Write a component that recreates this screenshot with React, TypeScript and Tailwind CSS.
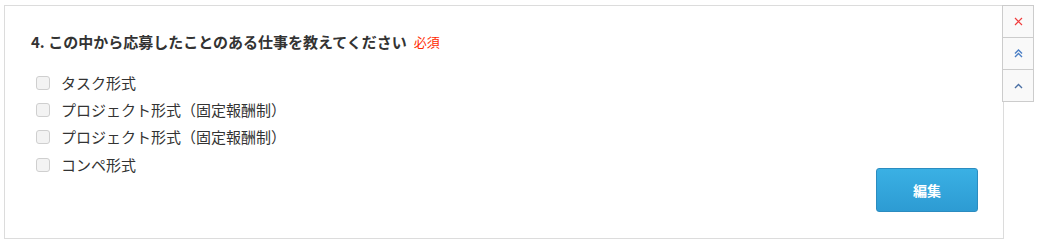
import React from 'react';

const options = [
  'タスク形式',
  'プロジェクト形式（固定報酬制）',
  'プロジェクト形式（固定報酬制）',
  'コンペ形式',
];

const App = () => {
  return (
    <div className="pl-[4px] pt-[5px] font-['Noto_Sans_CJK_JP','Noto_Sans',sans-serif] text-[#333]">
      <div className="relative flex h-[234px] w-[1000px] flex-col border border-[#dcdcdc] bg-white pb-[26px] pl-[26px] pr-[25px] pt-[26px]">
        {/* Question */}
        <div className="flex items-center leading-[20px]">
          <h2 className="text-[15px] font-bold text-[#333]">4. この中から応募したことのある仕事を教えてください</h2>
          <span className="ml-[7px] text-[13px] text-[#ff2a00]">必須</span>
        </div>

        <div className="mt-[17px] flex flex-1 justify-between">
          <ul className="self-start">
            {options.map((label, i) => (
              <li key={i} className="flex h-[27.3px] items-center">
                <span className="ml-[5px] inline-block h-[14px] w-[14px] rounded-[3px] border border-[#cfcfcf] bg-[#f3f3f3]" />
                <span className="ml-[11px] text-[15px] leading-[20px] text-[#333]">{label}</span>
              </li>
            ))}
          </ul>
          <button className="h-[44px] w-[102px] self-end rounded-[3px] border border-[#2b8cc0] bg-gradient-to-b from-[#3ab0e4] to-[#2d9bd3] text-[14px] font-bold text-white">
            編集
          </button>
        </div>

        {/* Side controls */}
        <div className="absolute left-[997px] top-[-1px] flex w-[32px] flex-col border border-[#cccccc] bg-[#f9f9f9]">
          <button className="flex h-[32px] items-center justify-center border-b border-[#cccccc]">
            <svg width="9" height="9" viewBox="0 0 9 9" fill="none" stroke="#f03c3c" strokeWidth="1.2">
              <path d="M1 1l7 7M8 1l-7 7" />
            </svg>
          </button>
          <button className="flex h-[32px] items-center justify-center border-b border-[#cccccc]">
            <svg width="9" height="9" viewBox="0 0 9 9" fill="none" stroke="#4a7ec4" strokeWidth="1.4">
              <path d="M1 4.5L4.5 1L8 4.5M1 8L4.5 4.5L8 8" />
            </svg>
          </button>
          <button className="flex h-[31px] items-center justify-center">
            <svg width="9" height="6" viewBox="0 0 9 6" fill="none" stroke="#4a6fa4" strokeWidth="1.4">
              <path d="M1 5L4.5 1.5L8 5" />
            </svg>
          </button>
        </div>
      </div>
    </div>
  );
};

export default App;
